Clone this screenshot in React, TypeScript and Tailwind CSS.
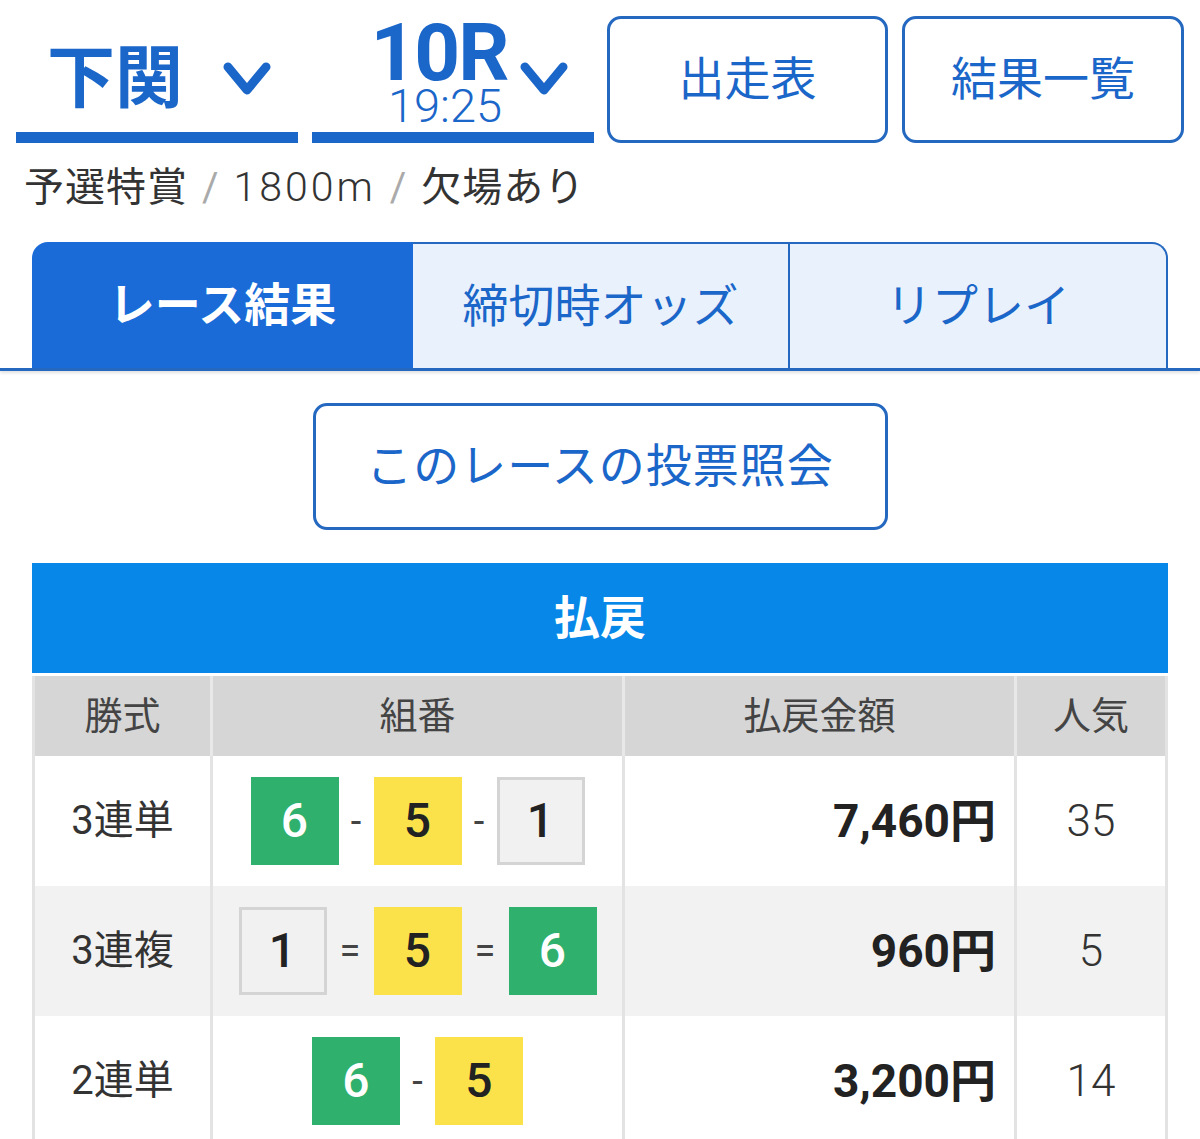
import React from 'react';

const blue = 'text-[#1b66c9]';

const Chevron: React.FC = () => (
  <svg width="48" height="36" viewBox="0 0 48 36" className="shrink-0">
    <polyline points="5,6 24,29 43,6" fill="none" stroke="#1b66c9" strokeWidth="9" strokeLinecap="round" strokeLinejoin="round" />
  </svg>
);

type Boat = 1 | 5 | 6;

const boatStyle: Record<Boat, string> = {
  1: 'bg-[#f1f1f1] text-[#222] border-[3px] border-[#d4d4d4]',
  5: 'bg-[#fbe24b] text-[#222]',
  6: 'bg-[#2fb06c] text-white',
};

const BoatBox: React.FC<{ n: Boat }> = ({ n }) => (
  <div className={`flex h-[88px] w-[88px] items-center justify-center text-[48px] font-medium ${boatStyle[n]}`}>{n}</div>
);

const Sep: React.FC<{ c: string }> = ({ c }) => (
  <span className={`text-center text-[38px] text-[#444] ${c === '=' ? 'w-[47px]' : 'w-[35px]'}`}>{c}</span>
);

const rows: { kind: string; combo: (Boat | string)[]; amount: string; pop: string; bg: string }[] = [
  { kind: '3連単', combo: [6, '-', 5, '-', 1], amount: '7,460円', pop: '35', bg: 'bg-white' },
  { kind: '3連複', combo: [1, '=', 5, '=', 6], amount: '960円', pop: '5', bg: 'bg-[#f2f2f2]' },
  { kind: '2連単', combo: [6, '-', 5], amount: '3,200円', pop: '14', bg: 'bg-white' },
];

const cols = 'grid grid-cols-[178px_412px_392px_1fr]';

const App: React.FC = () => (
  <div className="min-h-[1139px] w-[1200px] overflow-hidden bg-white font-['Roboto','Noto_Sans_CJK_JP',sans-serif]">
    {/* top selectors */}
    <div className="flex gap-[14px] px-4 pt-4">
      <div className="flex h-[127px] w-[282px] flex-col justify-end">
        <div className="flex h-[115px] items-center justify-center gap-10 pl-1 pt-[8px]">
          <span className={`text-[68px] font-bold leading-none ${blue}`}>下関</span>
          <Chevron />
        </div>
        <div className="h-[11px] bg-[#1b66c9]" />
      </div>
      <div className="flex h-[127px] w-[282px] flex-col justify-end">
        <div className="flex h-[115px] items-start justify-center gap-3 pl-8">
          <div className="flex flex-col items-center">
            <span className={`mt-[6px] text-[80px] font-bold leading-[60px] tracking-tight ${blue}`}>10R</span>
            <span className={`mt-[2px] ml-3 text-[47px] font-light leading-[42px] ${blue}`}>19:25</span>
          </div>
          <div className="mt-[44px]">
            <Chevron />
          </div>
        </div>
        <div className="h-[11px] bg-[#1b66c9]" />
      </div>
      <button className={`ml-[-1px] flex h-[127px] w-[281px] items-center justify-center rounded-[14px] border-[3px] border-[#2468c0] text-[46px] ${blue}`}>
        出走表
      </button>
      <button className={`flex h-[127px] w-[282px] items-center justify-center rounded-[14px] border-[3px] border-[#2468c0] text-[46px] ${blue}`}>
        結果一覧
      </button>
    </div>

    {/* race info */}
    <div className="mt-[20px] pl-[24px] text-[40px] leading-[48px] tracking-[1px] text-[#333]">
      予選特賞
      <span className="mx-[14px] text-[#aaa]">/</span>
      <span className="text-[41px] font-light tracking-[3px]">1800m</span>
      <span className="mx-[14px] text-[#aaa]">/</span>
      欠場あり
    </div>

    {/* tabs */}
    <div className="mt-[30px] border-b-[3px] border-[#2468c0] shadow-[0_2px_3px_rgba(0,0,0,0.12)]">
      <div className="mx-8 flex h-[126px]">
        <div className="flex w-[381px] items-center justify-center rounded-tl-[16px] bg-[#1a6bd8] text-[46px] font-bold text-white">
          レース結果
        </div>
        <div className={`flex w-[377px] items-center justify-center border-t-2 border-r-2 border-[#2468c0] bg-[#e9f2fc] text-[46px] ${blue}`}>
          締切時オッズ
        </div>
        <div className={`flex flex-1 items-center justify-center rounded-tr-[16px] border-t-2 border-r-2 border-[#2468c0] bg-[#e9f2fc] text-[46px] ${blue}`}>
          リプレイ
        </div>
      </div>
    </div>

    {/* query button */}
    <div className="mt-[32px] flex justify-center">
      <button className={`flex h-[127px] w-[575px] items-center justify-center rounded-[14px] border-[3px] border-[#2468c0] text-[46px] tracking-[1px] ${blue}`}>
        このレースの投票照会
      </button>
    </div>

    {/* payout table */}
    <div className="mx-8 mt-[33px]">
      <div className="flex h-[110px] items-center justify-center bg-[#0788e8] text-[46px] font-bold text-white">払戻</div>
      <div className={`${cols} mt-[3px] h-[80px] border-x-[3px] border-[#e3e3e3] bg-[#d6d6d6] text-[38px] text-[#444]`}>
        <div className="flex items-center justify-center border-r-[3px] border-[#e8e8e8]">勝式</div>
        <div className="flex items-center justify-center border-r-[3px] border-[#e8e8e8]">組番</div>
        <div className="flex items-center justify-center border-r-[3px] border-[#e8e8e8]">払戻金額</div>
        <div className="flex items-center justify-center">人気</div>
      </div>
      {rows.map((r) => (
        <div key={r.kind} className={`${cols} h-[130px] border-x-[3px] border-[#e3e3e3] ${r.bg}`}>
          <div className="flex items-center justify-center border-r-[3px] border-[#e3e3e3] text-[40px] text-[#333]">{r.kind}</div>
          <div className="flex items-center justify-center border-r-[3px] border-[#e3e3e3]">
            {r.combo.map((c, i) => (typeof c === 'number' ? <BoatBox key={i} n={c} /> : <Sep key={i} c={c} />))}
          </div>
          <div className="flex items-center justify-end border-r-[3px] border-[#e3e3e3] pr-[18px] text-[46px] font-bold text-[#222]">{r.amount}</div>
          <div className="flex items-center justify-center text-[44px] font-light text-[#333]">{r.pop}</div>
        </div>
      ))}
    </div>
  </div>
);

export default App;
